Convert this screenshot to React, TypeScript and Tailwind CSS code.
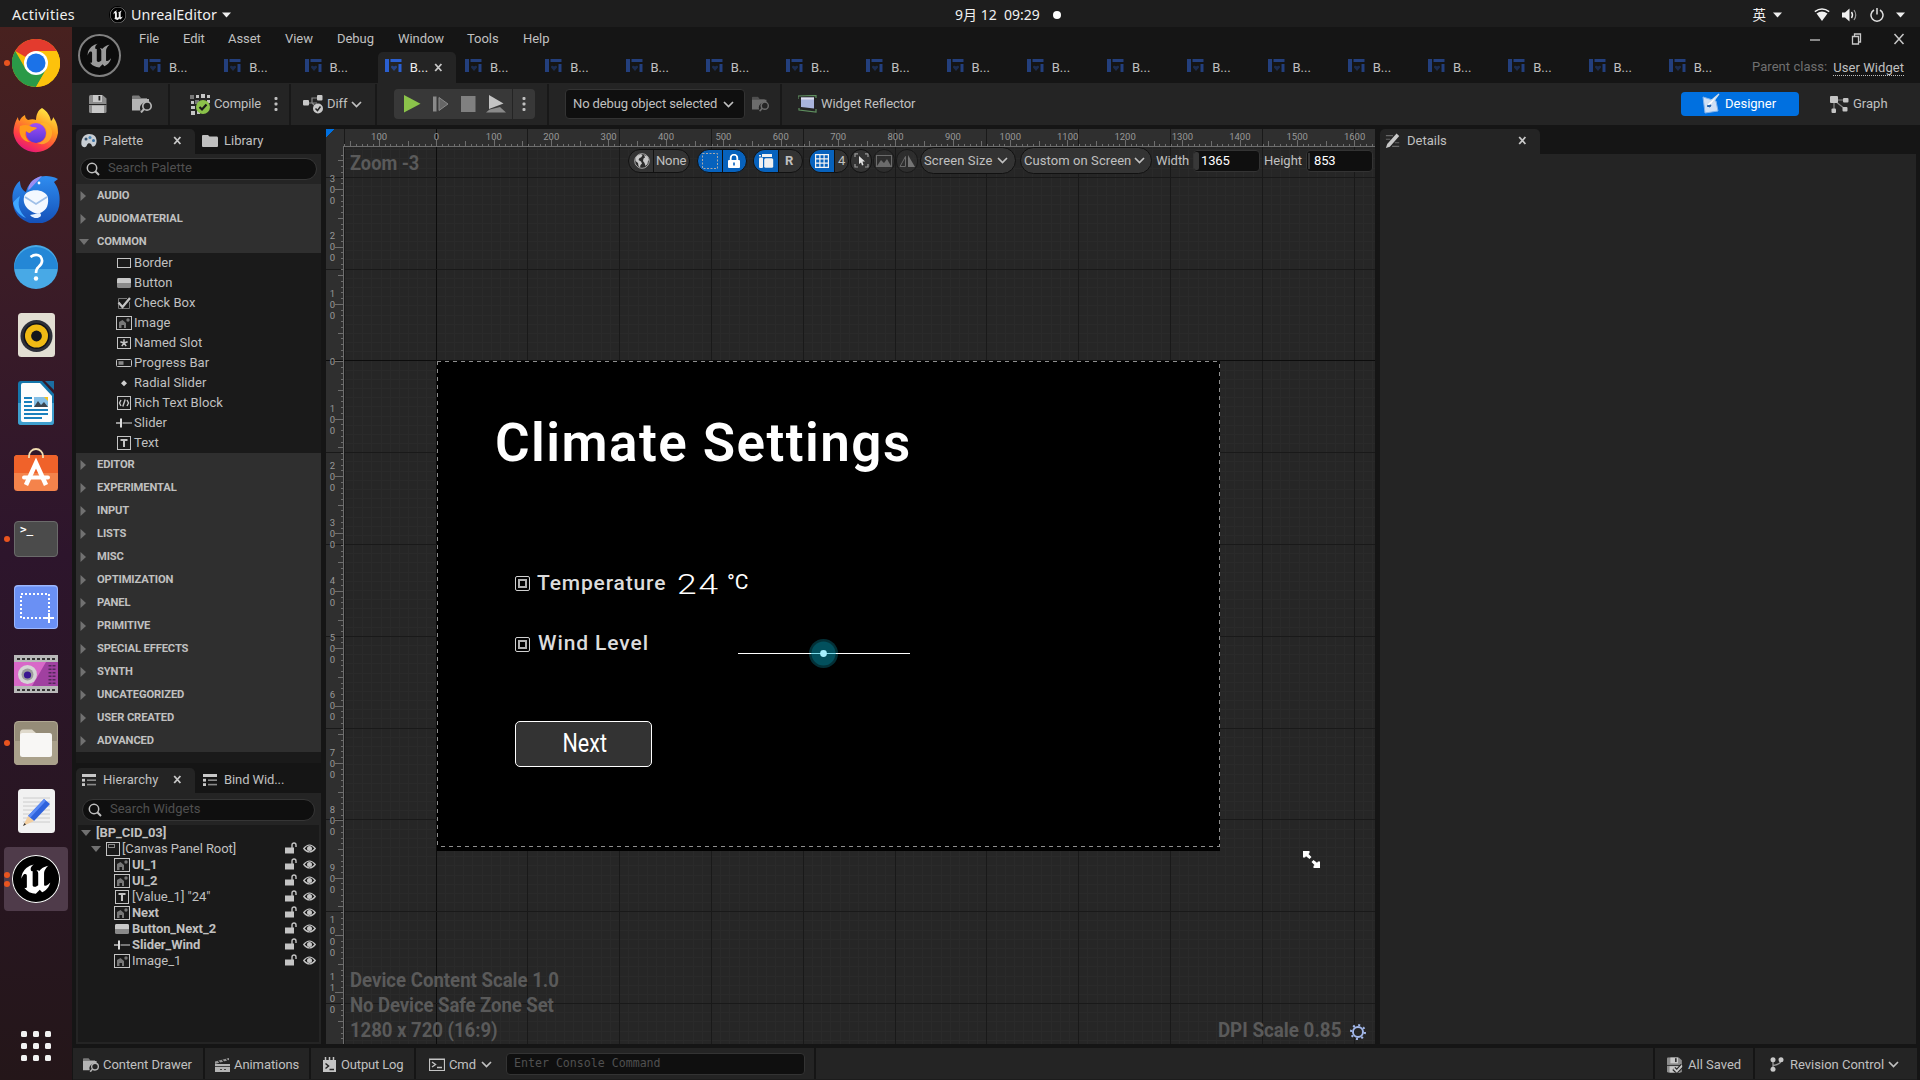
import React from "react";
import { SiUnrealengine } from "react-icons/si";

const range = (a: number, b: number) => Array.from({ length: b - a + 1 }, (_, i) => a + i);

/* ---------- small icons ---------- */

const Chevron = ({ className = "" }: { className?: string }) => (
  <svg className={"h-[7px] w-[11px] shrink-0 " + className} viewBox="0 0 11 7" fill="none" stroke="#c0c0c0" strokeWidth="1.7">
    <path d="M1 1l4.5 4.5L10 1" />
  </svg>
);

const Dots = () => (
  <svg className="h-4 w-1 shrink-0" viewBox="0 0 4 16" fill="#c0c0c0">
    <rect x=".5" y="1" width="3" height="3" rx="1" />
    <rect x=".5" y="6.5" width="3" height="3" rx="1" />
    <rect x=".5" y="12" width="3" height="3" rx="1" />
  </svg>
);

const Close = () => (
  <svg className="h-[9px] w-[9px] shrink-0" viewBox="0 0 9 9" stroke="#c8c8c8" strokeWidth="1.8">
    <path d="M1.2 1l6.2 7M7.4 1L1.2 8" />
  </svg>
);

const WidgetTabIcon = ({ active = false }: { active?: boolean }) => (
  <svg className="-mt-[3px] h-[14px] w-[17px] shrink-0" viewBox="0 0 17 14" fill={active ? "#2a5fd0" : "#233f7d"}>
    <rect x="0" y="0" width="4" height="13" />
    <rect x="5.5" y="0" width="11" height="3" />
    <rect x="13.5" y="5" width="3" height="8" />
    <path d="M9 12L6 8.5C5.4 6.6 8 6 9 7.500C10 6 12.600 6.600 12 8.500z" opacity=".55" />
  </svg>
);

const FolderSearch = ({ color = "#b4b4b4" }: { color?: string }) => (
  <svg className="h-[18px] w-[21px] shrink-0" viewBox="0 0 21 18">
    <path d="M0 1.500Q0 .5 1 .5H7L9 3H15V5H0z" fill={color} opacity=".6" />
    <path d="M0 4H17V8A6 6 0 0 0 8.500 15.500H0z" fill={color} />
    <circle cx="15" cy="11" r="4.200" fill="#242424" stroke={color} strokeWidth="1.700" />
    <path d="M12 14l-3 3.500" stroke={color} strokeWidth="2" />
  </svg>
);

const Floppy = ({ check = false }: { check?: boolean }) => (
  <svg className="h-[18px] w-[18px] shrink-0" viewBox="0 0 18 18">
    <path d="M0 1.500Q0 0 1.500 0H13.500L17.500 3.500V16.500Q17.500 18 16 18H1.500Q0 18 0 16.500z" fill="#8d8d8d" />
    <rect x="4" y="0" width="9" height="7" fill="#c8c8c8" />
    <rect x="9.500" y="1" width="1.800" height="4.500" fill="#242424" />
    <path d="M3 10.500H15V18H3z" fill="#c8c8c8" />
    <path d="M0 9.500H17.500" stroke="#242424" strokeWidth="1" />
    {check && <path d="M8 13l3.500 3.500L18 9.500" stroke="#242424" strokeWidth="5" fill="none" />}
    {check && <path d="M8 13l3.500 3.500L18 9.500" stroke="#c8c8c8" strokeWidth="2.400" fill="none" />}
  </svg>
);

const Search = () => (
  <svg className="h-[14px] w-[14px] shrink-0" viewBox="0 0 14 14" fill="none" stroke="#c0c0c0" strokeWidth="1.500">
    <circle cx="6" cy="6" r="4.700" />
    <path d="M9.300 9.300L13 13" strokeWidth="2" />
  </svg>
);

const ListIcon = () => (
  <svg className="h-3 w-[15px] shrink-0" viewBox="0 0 15 12" fill="#c8c8c8">
    <rect width="14" height="3" />
    <rect y="4.800" width="3" height="2.800" />
    <rect y="9.200" width="3" height="2.800" />
    <rect x="5" y="5.400" width="9" height="1.600" fill="#8a8a8a" />
    <rect x="5" y="9.800" width="9" height="1.600" fill="#8a8a8a" />
  </svg>
);

type Kind = "border" | "button" | "check" | "image" | "slot" | "progress" | "radial" | "rich" | "slider" | "text" | "panel";

const W = ({ k }: { k: Kind }) => (
  <svg className="h-[14px] w-4 shrink-0" viewBox="0 0 16 14" fill="none" stroke="#c4c4c4" strokeWidth="1">
    {k === "border" && <rect x="1.500" y="2.500" width="13" height="9" />}
    {k === "button" && (
      <>
        <rect x="1" y="2" width="14" height="10" rx="1.500" fill="#8a8a8a" stroke="none" />
        <path d="M1 7V3.500Q1 2 2.500 2H13.500Q15 2 15 3.500V7z" fill="#c8c8c8" stroke="none" />
      </>
    )}
    {k === "check" && (
      <>
        <path d="M11 2.500H2.500V12.500H13.500V6" stroke="#777" />
        <path d="M2.500 6.500L6.500 11L14 2" strokeWidth="2.300" />
      </>
    )}
    {k === "image" && (
      <>
        <rect x=".5" y=".5" width="15" height="13" />
        <path d="M3 12V6L6.500 4L10 7V12H8V9H5.500V12z" fill="#777" stroke="none" />
        <circle cx="12" cy="4" r="1.700" fill="#777" stroke="none" />
      </>
    )}
    {k === "slot" && (
      <>
        <rect x="1.500" y="1.500" width="13" height="11" />
        <path d="M8 7V3.200M8 7L11.600 5.800M8 7L10.200 10.200M8 7L5.800 10.200M8 7L4.400 5.800" strokeWidth="1.500" />
      </>
    )}
    {k === "progress" && (
      <>
        <rect x=".5" y="3.500" width="15" height="7" rx="1" />
        <rect x="2.500" y="5.200" width="5" height="3.600" fill="#888" stroke="none" />
      </>
    )}
    {k === "radial" && <path d="M8 4.200L11 7.200L8 10.200L5 7.200z" fill="#d0d0d0" stroke="none" />}
    {k === "rich" && (
      <>
        <rect x="1.500" y=".5" width="13" height="13" />
        <path d="M5 4L3.500 7L5 10M11 4L12.500 7L11 10M9.200 3.500L6.800 10.500" strokeWidth="1.400" />
      </>
    )}
    {k === "slider" && (
      <>
        <path d="M0 7H4" strokeWidth="2" stroke="#999" />
        <path d="M6.500 7H16" strokeWidth="2" stroke="#777" />
        <path d="M5 2.500V11.500" strokeWidth="2" stroke="#ddd" />
      </>
    )}
    {k === "text" && (
      <>
        <rect x="1.500" y=".5" width="13" height="13" />
        <path d="M4.500 4H11.500M8 4V11" strokeWidth="2" />
      </>
    )}
    {k === "panel" && (
      <>
        <rect x="1.500" y=".5" width="13" height="13" />
        <rect x="3.500" y="2.500" width="6" height="3" stroke="#888" />
      </>
    )}
  </svg>
);

const Lock = () => (
  <svg className="h-3 w-3 shrink-0" viewBox="0 0 12 12">
    <rect x="0" y="5.500" width="9" height="6" fill="#c4c4c4" />
    <path d="M7 6V3A2 2 0 0 1 11 3V5" stroke="#c4c4c4" strokeWidth="1.400" fill="none" />
  </svg>
);

const Eye = () => (
  <svg className="h-[9px] w-[13px] shrink-0" viewBox="0 0 13 9">
    <path d="M.7 4.500Q6.500-2.500 12.300 4.500Q6.500 11.500 .7 4.500z" fill="none" stroke="#c4c4c4" strokeWidth="1.200" />
    <circle cx="6.500" cy="4.500" r="2.500" fill="#c4c4c4" />
  </svg>
);

/* ---------- desktop shell ---------- */

const Caret = () => (
  <svg className="h-[6px] w-[9px] shrink-0" viewBox="0 0 9 6" fill="#eee">
    <path d="M0 .5H9L4.500 5.500z" />
  </svg>
);

const TopBar = () => (
  <div className="grid h-[27px] shrink-0 grid-cols-[955px_1fr] bg-[#1d1d1d] font-['Noto_Sans','Noto_Sans_CJK_SC',sans-serif] text-[14.300px] leading-[28px] text-[#f0f0f0]">
    <div className="flex items-center pl-3">
      <span className="w-[97px] pt-px tracking-[0.350px]">Activities</span>
      <span className="flex h-[17px] w-[17px] items-center justify-center rounded-full bg-black">
        <SiUnrealengine className="h-4 w-4" />
      </span>
      <span className="ml-[5px] w-[86px] pt-px tracking-[0.100px]">UnrealEditor</span>
      <span className="ml-[5px]"><Caret /></span>
    </div>
    <div className="flex items-center">
      <span className="w-[86px] pt-px text-[14px] whitespace-pre">9月 12  09:29</span>
      <span className="ml-3 h-2 w-2 rounded-full bg-white" />
      <span className="ml-auto pt-px text-[13.500px]">英</span>
      <span className="ml-[7px]"><Caret /></span>
      <svg className="ml-8 h-[14px] w-[16px]" viewBox="0 0 16 14" fill="#f0f0f0">
        <path d="M2.500 5.500Q8 1.500 13.500 5.500L8 13z" />
        <path d="M.8 3.600Q8-1.500 15.200 3.600" stroke="#f0f0f0" strokeWidth="1.500" fill="none" />
      </svg>
      <svg className="ml-3 h-[14px] w-[16px]" viewBox="0 0 16 14" fill="#f0f0f0">
        <path d="M0 4.500H3L7.500 .5V13.500L3 9.500H0z" />
        <path d="M9.500 4Q11.500 7 9.500 10" stroke="#f0f0f0" strokeWidth="1.400" fill="none" />
        <path d="M12 2Q15.500 7 12 12" stroke="#999" strokeWidth="1.200" fill="none" />
      </svg>
      <svg className="ml-3 h-[14px] w-[14px]" viewBox="0 0 14 14" stroke="#e0e0e0" strokeWidth="1.500" fill="none">
        <path d="M4 2A6 6 0 1 0 10 2M7 0V6.500" />
      </svg>
      <span className="mr-[15px] ml-3"><Caret /></span>
    </div>
  </div>
);

const Chrome = () => (
  <svg className="h-12 w-12" viewBox="0 0 48 48">
    <circle cx="24" cy="24" r="24" fill="#fbbc05" />
    <path d="M24 24L3.200 12A24 24 0 0 1 44.800 12H24z" fill="#e33b2e" />
    <path d="M3.200 12A24 24 0 0 0 24 48L34.400 30L24 24L13.600 30z" fill="#2a9a48" />
    <path d="M24 12H44.800A24 24 0 0 1 24 48L34.400 30z" fill="#fdc20c" />
    <circle cx="24" cy="24" r="12" fill="#fff" />
    <circle cx="24" cy="24" r="9.500" fill="#1b72e8" />
  </svg>
);

const Firefox = () => (
  <svg className="h-12 w-12" viewBox="0 0 48 48">
    <defs>
      <linearGradient id="fx" x1=".8" y1="0" x2=".3" y2="1">
        <stop offset="0" stopColor="#fff14a" />
        <stop offset=".4" stopColor="#ff9a20" />
        <stop offset=".75" stopColor="#ff3f45" />
        <stop offset="1" stopColor="#e2137e" />
      </linearGradient>
      <linearGradient id="fp" x1="0" y1="0" x2="0" y2="1">
        <stop offset="0" stopColor="#a24ff5" />
        <stop offset="1" stopColor="#5536d6" />
      </linearGradient>
    </defs>
    <path d="M30 1C36 5 38 9 39 14C41 12 41 11 41 10C45 15 46 20 46 26A22.500 22.500 0 0 1 1.500 26C1.500 19 4 13 6 10C6 12 6.500 13 7.500 14C8.500 11 11 9 13 8C13 10 14 12 16 13C19 12 22 12 24 13C24 8 26 3 30 1z" fill="url(#fx)" />
    <circle cx="24" cy="26" r="10" fill="url(#fp)" />
    <path d="M8 19C13 17 17 18 20 20C22 20 24 20 25 21C23 23 20 23 18 26C16 26 14 24 14 24C12 28 15 34 19 35C10 35 6 27 8 19z" fill="#ff9a1c" />
    <path d="M28 17C33 18 36 23 34 29C33 33 29 36 25 36C33 40 41 33 40 24C38 17 33 14 28 17z" fill="#ffb52a" opacity=".75" />
  </svg>
);

const Thunderbird = () => (
  <svg className="h-12 w-12" viewBox="0 0 48 48">
    <defs>
      <linearGradient id="tb" x1="0" y1="0" x2="0" y2="1">
        <stop offset="0" stopColor="#2f8df0" />
        <stop offset="1" stopColor="#1450b8" />
      </linearGradient>
    </defs>
    <path d="M18 9C22 2 34-2 46 4L42 7C47 14 48 20 47.500 27A23 21 0 0 1 1 28C-1 20 2 10 8 6C8 11 10 15 14 17C15 13 16 11 18 9z" fill="url(#tb)" />
    <path d="M16 15C17 7 22 3 30 1C26 5 22 10 18 14z" fill="#9a8df2" />
    <path d="M1 28C2 33 6 40 14 43C7 36 5 30 8 21C4 24 2 26 1 28z" fill="#3fa6ff" />
    <path d="M12 22C14 13 34 13 36 23C37 32 33 36 28 38C25 40 20 37 16 34C13 31 11 27 12 22z" fill="#f4f8ff" />
    <path d="M13 22L24 29L35 22" stroke="#9fbfe8" strokeWidth="1.800" fill="none" />
    <path d="M28 38C32 42 23 46 18 40z" fill="#e6f1ff" />
    <circle cx="27" cy="8" r="1.400" fill="#fff" />
  </svg>
);

const Help = () => (
  <svg className="h-11 w-11" viewBox="0 0 44 44">
    <circle cx="22" cy="22" r="22" fill="#48a9e6" />
    <path d="M0 24A22 22 0 0 1 44 24z" fill="#2487d6" />
    <path d="M16.500 12Q22 8 26.500 11.500Q30.500 17 24.500 22Q22 24 22 28" stroke="#fff" strokeWidth="2.600" fill="none" />
    <circle cx="22" cy="33.500" r="2.200" fill="#fff" />
  </svg>
);

const Speaker = () => (
  <svg className="h-11 w-[37px]" viewBox="0 0 37 44">
    <rect width="37" height="44" rx="3.500" fill="#e2ded2" />
    <circle cx="18.500" cy="23" r="16" fill="#2d2f38" />
    <circle cx="18.500" cy="23" r="13" fill="#11131a" />
    <circle cx="18.500" cy="23" r="11.500" fill="#f0ba14" />
    <circle cx="18.500" cy="23" r="5.400" fill="#15171c" />
  </svg>
);

const Writer = () => (
  <svg className="h-11 w-9" viewBox="0 0 36 44">
    <path d="M3 0H24L36 13V41Q36 44 33 44H3Q0 44 0 41V3Q0 0 3 0z" fill="#1576ab" />
    <path d="M0 22H36V41Q36 44 33 44H3Q0 44 0 41z" fill="#3f9fce" />
    <path d="M5 2H22L34 15V39Q34 41 32 41H5Q3 41 3 39V4Q3 2 5 2z" fill="#fdfdfd" />
    <path d="M27 0H36V9z" fill="#1b6ea2" />
    <path d="M6 17H14M6 21H14M6 25H14M6 29H30M6 33H30M6 37H24" stroke="#1a80bd" strokeWidth="1.800" />
    <rect x="16" y="16" width="14" height="10" fill="#85bfe6" />
    <path d="M16 26L20 20L23 24L26 21L30 26z" fill="#3a4650" />
    <path d="M26 16H30V20z" fill="#f5c31b" />
  </svg>
);

const Software = () => (
  <svg className="-mt-1 h-11 w-11" viewBox="0 0 44 44">
    <rect y="8" width="44" height="36" rx="3.500" fill="#f4834b" />
    <path d="M0 26V11.500Q0 8 3.500 8H40.500Q44 8 44 11.500V26z" fill="#f0622a" />
    <path d="M12 38L22 16L32 38" stroke="#fff" strokeWidth="4.500" fill="none" />
    <path d="M10 30.500H34" stroke="#fff" strokeWidth="4" strokeLinecap="round" />
    <path d="M15 11V9A7 7 0 0 1 29 9V11" stroke="#f0dcb0" strokeWidth="1.800" fill="none" />
  </svg>
);

const Terminal = () => (
  <div className="h-9 w-11 rounded-[4px] border border-[#6b6b6b] bg-[#4b4b4b] pt-[2px] pl-[5px] font-['DejaVu_Sans_Mono',monospace] text-[11px] leading-[12px] font-bold text-white">&gt;_</div>
);

const Screenshot = () => (
  <svg className="h-11 w-11" viewBox="0 0 44 44">
    <rect width="44" height="44" rx="4" fill="#9bb7ff" />
    <rect x="1" y="1.500" width="42" height="41.500" rx="3" fill="#6a90f4" />
    <rect x="7" y="9" width="28" height="24" fill="none" stroke="#fff" strokeWidth="2" strokeDasharray="2 2" />
    <path d="M35 28V38M30 33H40" stroke="#fff" strokeWidth="2" />
  </svg>
);

const Video = () => (
  <svg className="-mt-[2px] h-[38px] w-11" viewBox="0 0 44 38">
    <rect width="44" height="38" fill="#b9b9b9" />
    <path d="M3 4H42M3 35H42" stroke="#333" strokeWidth="2" strokeDasharray="3 2" />
    <rect y="7" width="44" height="24" fill="#a040a0" />
    <path d="M0 7H32L18 31H0z" fill="#d868c8" />
    <path d="M36 10V29M40 10V29" stroke="#53285a" strokeWidth="3" strokeDasharray="1.500 2" />
    <circle cx="13.500" cy="19.500" r="9.500" fill="#d5d5d5" />
    <circle cx="13.500" cy="19.500" r="6" fill="#9c9c9c" />
    <circle cx="13.500" cy="20" r="3.600" fill="#3a1590" />
  </svg>
);

const Files = () => (
  <svg className="h-11 w-11" viewBox="0 0 44 44">
    <rect width="44" height="44" rx="4.500" fill="#b0a892" />
    <rect x="1" y="1" width="42" height="42" rx="4" fill="#958c78" />
    <path d="M0 20H44V40Q44 44 40 44H4Q0 44 0 40z" fill="#aaa18b" />
    <path d="M6 12Q6 8.500 9 8.500H18L22 12V16H6z" fill="#dfd9cb" />
    <rect x="6" y="12" width="32" height="24" rx="2.500" fill="#f8f7f5" />
  </svg>
);

const Editor = () => (
  <svg className="h-11 w-[37px]" viewBox="0 0 37 44">
    <rect width="37" height="44" rx="3.500" fill="#f1f1f1" />
    <path d="M5 9H32M5 13H32M5 17H32M5 21H32M5 25H32M5 29H32M5 33H32" stroke="#ccc" strokeWidth="1" />
    <path d="M10 27L26 10L32 15L16 32z" fill="#2f62dc" />
    <path d="M10 27L26 10L28 11.700L12 29z" fill="#5b8af5" />
    <path d="M10 27L5 37L16 32z" fill="#f3cfa0" />
    <path d="M6.500 34L5 37L8 35.500z" fill="#333" />
  </svg>
);

const dockItems: { icon: React.ReactNode; dots: number; active?: boolean }[] = [
  { icon: <Chrome />, dots: 1 },
  { icon: <Firefox />, dots: 0 },
  { icon: <Thunderbird />, dots: 0 },
  { icon: <Help />, dots: 0 },
  { icon: <Speaker />, dots: 0 },
  { icon: <Writer />, dots: 0 },
  { icon: <Software />, dots: 0 },
  { icon: <Terminal />, dots: 1 },
  { icon: <Screenshot />, dots: 0 },
  { icon: <Video />, dots: 0 },
  { icon: <Files />, dots: 1 },
  { icon: <Editor />, dots: 0 },
  {
    icon: (
      <span className="flex h-12 w-12 items-center justify-center rounded-full bg-black text-white">
        <SiUnrealengine className="h-12 w-12" />
      </span>
    ),
    dots: 2,
    active: true,
  },
];

const Dock = () => (
  <div className="flex w-[72px] shrink-0 flex-col items-center gap-1 bg-linear-to-b from-[#48211f] via-[#2d152c] to-[#241619] pt-1">
    {dockItems.map((d, i) => (
      <div key={i} className={"relative flex h-16 w-16 items-center justify-center rounded-[4px] " + (d.active ? "bg-[#4f3b4a]" : "")}>
        {d.icon}
        <div className="absolute top-0 left-0 flex h-16 flex-col items-center justify-center gap-[3px]">
          {range(1, d.dots).map((n) => (
            <span key={n} className="h-[6px] w-[6px] rounded-full bg-[#e9541f]" />
          ))}
        </div>
      </div>
    ))}
    <div className="mt-auto mb-[19px] grid grid-cols-3 gap-[6px]">
      {range(1, 9).map((n) => (
        <span key={n} className="h-[6px] w-[6px] rounded-[1.500px] bg-[#f2f2f2]" />
      ))}
    </div>
  </div>
);

/* ---------- editor header ---------- */

const menus: [string, string][] = [
  ["File", "w-[44px]"],
  ["Edit", "w-[45px]"],
  ["Asset", "w-[57px]"],
  ["View", "w-[52px]"],
  ["Debug", "w-[61px]"],
  ["Window", "w-[69px]"],
  ["Tools", "w-[56px]"],
  ["Help", "w-[40px]"],
];

const Header = () => (
  <div className="flex h-14 shrink-0">
    <div className="flex w-[65px] items-center pl-[6px]">
      <span className="flex h-[43px] w-[43px] items-center justify-center rounded-full border-2 border-[#808080] bg-[#0c0c0c]">
        <span className="flex h-[34px] w-[34px] items-center justify-center overflow-hidden rounded-full">
          <SiUnrealengine className="h-[39px] w-[39px] shrink-0 text-[#9a9a9a]" />
        </span>
      </span>
    </div>
    <div className="flex flex-1 flex-col">
      <div className="flex h-[25px] items-center pb-[2px] pl-[2px] tracking-[-0.050px]">
        {menus.map(([m, w]) => (
          <span key={m} className={w}>{m}</span>
        ))}
        <svg className="ml-auto mr-[15px] h-4 w-[96px]" viewBox="0 0 96 16" fill="none" stroke="#c8c8c8" strokeWidth="1.300">
          <path d="M1 9H11" />
          <path d="M43.500 5.500H49.500V13H43.500zM45.500 5V3H51.500V11H50" />
          <path d="M85.500 3L94.500 13M94.500 3L85.500 13" strokeWidth="1.500" />
        </svg>
      </div>
      <div className="flex h-[31px]">
        {range(0, 19).map((i) => (
          <div key={i} className="flex w-[80.250px] shrink-0">
            <div className={"flex w-[78px] items-center rounded-t-[5px] pl-[7px] " + (i === 3 ? "bg-[#242424] text-[#eee]" : "")}>
              <WidgetTabIcon active={i === 3} />
              <span className="ml-2 w-[24px]">B...</span>
              {i === 3 && <Close />}
            </div>
          </div>
        ))}
        <div className="ml-auto flex items-center gap-[6px] pr-4 tracking-[0.050px]">
          <span className="pb-px text-[#707070]">Parent class:</span>
          <span className="border-b border-dotted border-[#c0c0c0] leading-[15px]">User Widget</span>
        </div>
      </div>
    </div>
  </div>
);

const Sep = () => <span className="h-[41px] w-[2px] shrink-0 bg-[#181818]" />;

const Toolbar = () => (
  <div className="flex h-[42px] shrink-0 items-center bg-[#242424] tracking-[-0.100px]">
    <div className="flex w-[96px] items-center gap-[25px] pl-[17px]"><Floppy /><FolderSearch /></div>
    <Sep />
    <div className="flex w-[119px] items-center pl-5">
      <svg className="h-[21px] w-[21px]" viewBox="0 0 21 21">
        <path d="M0 1H4V5H0zM5 6H9V10H5z" fill="#777" />
        <path d="M6 1H9V4H6zM11 0H15V4H11zM17 1H20V4H17zM1 7H4V10H1zM1 12H5V15H1zM1 17H5V21H1zM17 6H20V9H17zM7 17H10V20H7z" fill="#c4c4c4" />
        <circle cx="13" cy="13" r="7" fill="#8bc24a" />
        <path d="M9.500 13L12 15.500L16.500 10.500" stroke="#1a1a1a" strokeWidth="2.200" fill="none" />
      </svg>
      <span className="ml-[3px] w-[60px]">Compile</span>
      <Dots />
    </div>
    <Sep />
    <div className="flex w-[84px] items-center pl-3">
      <svg className="h-[19px] w-5" viewBox="0 0 20 19">
        <path d="M5 8H14M9 8V3H14M9 8L14 13" stroke="#888" strokeWidth="1.200" fill="none" />
        <rect x="0" y="5" width="6" height="5.500" rx="1" fill="#c8c8c8" />
        <rect x="14" y="0" width="5.500" height="5.500" rx="1" fill="#c8c8c8" />
        <circle cx="15" cy="13.500" r="5" fill="#c8c8c8" />
        <path d="M12.500 13.500L14.500 15.500L17.500 11.500" stroke="#242424" strokeWidth="1.500" fill="none" />
      </svg>
      <span className="ml-1 w-6">Diff</span>
      <Chevron />
    </div>
    <Sep />
    <div className="flex w-[170px] pl-[17px]">
      <div className="flex h-[30px] w-[141px] items-center rounded-[4px] bg-[#383838]">
        <svg className="h-[18px] w-[118px]" viewBox="0 0 118 18">
          <path d="M10 0L26.500 8.800L10 17.500z" fill="#8bc34a" />
          <rect x="39" y="1.500" width="3.500" height="15" fill="#8a8a8a" />
          <path d="M45 2.500L54 9L45 15.500z" fill="#666" stroke="#8a8a8a" />
          <rect x="67" y="1" width="14.500" height="16" fill="#808080" />
          <path d="M95 0L109.500 8.500L95 14z" fill="#c4c4c4" />
          <path d="M92 17.500L95.500 14.500L106 12L112 17.500z" fill="#8a8a8a" />
        </svg>
        <span className="h-[30px] w-px bg-[#242424]" />
        <span className="ml-[9px]"><Dots /></span>
      </div>
    </div>
    <Sep />
    <div className="flex w-[231px] items-center pl-4">
      <div className="flex h-[30px] w-[180px] items-center justify-between rounded-[4px] border border-[#333] bg-[#0f0f0f] pr-[10px] pl-[7px] tracking-[-0.120px] whitespace-nowrap">
        No debug object selected <Chevron />
      </div>
      <span className="ml-[7px] flex w-[18px] origin-left scale-[0.850] opacity-50"><FolderSearch /></span>
    </div>
    <Sep />
    <div className="flex items-center pl-4">
      <svg className="h-[18px] w-[19px]" viewBox="0 0 19 18">
        <path d="M0 4V1L18 .5V3M1 13V15L18 17V14" stroke="#5f8f5f" strokeWidth="1.200" fill="none" />
        <path d="M3 2.500H16V13.500L3 12z" fill="#a9b4dc" />
        <path d="M3 2.500H16V4.500H3z" fill="#dde" />
      </svg>
      <span className="ml-1">Widget Reflector</span>
    </div>
    <div className="ml-auto flex h-6 w-[118px] items-center rounded-[4px] bg-[#0070e0] pl-5 text-white">
      <svg className="h-[22px] w-5" viewBox="0 0 20 22">
        <path d="M2 4L15 8L17 18L4 20z" fill="#cfe0f5" stroke="#7fb2ec" strokeWidth="1" />
        <path d="M18 1L10 12L6 13L7 10z" fill="#fff" stroke="#cde" strokeWidth="1.200" />
        <path d="M6 13L10 12L9 14z" stroke="#1c5fae" fill="#1c5fae" />
      </svg>
      <span className="ml-1 tracking-normal">Designer</span>
    </div>
    <div className="flex w-[121px] items-center pl-[31px]">
      <svg className="h-[17px] w-[19px]" viewBox="0 0 19 17">
        <path d="M7 4H15M5 5L15 13M4 6V15" stroke="#888" strokeWidth="1.200" />
        <rect width="8" height="7" rx="1" fill="#c4c4c4" />
        <rect x="13" y="2" width="5.500" height="4.500" rx="1" fill="#c4c4c4" />
        <rect x="12.500" y="11" width="5" height="4.500" rx="1" fill="#c4c4c4" />
        <rect x="1.500" y="12.500" width="4.500" height="4.500" rx="1" fill="#c4c4c4" />
      </svg>
      <span className="ml-1 tracking-normal">Graph</span>
    </div>
  </div>
);

/* ---------- left column ---------- */

const Category = ({ label, open = false }: { label: string; open?: boolean }) => (
  <div className="flex h-[23px] items-center bg-[#2f2f2f]">
    <svg className="ml-[3px] h-[10px] w-[10px]" viewBox="0 0 10 10" fill="#717171">
      {open ? <path d="M0 2H10L5 8z" /> : <path d="M1.500 0L7 5L1.500 10z" />}
    </svg>
    <span className="ml-[8px] text-[11.200px] font-bold tracking-[-0.120px]">{label}</span>
  </div>
);

const paletteItems: [Kind, string][] = [
  ["border", "Border"],
  ["button", "Button"],
  ["check", "Check Box"],
  ["image", "Image"],
  ["slot", "Named Slot"],
  ["progress", "Progress Bar"],
  ["radial", "Radial Slider"],
  ["rich", "Rich Text Block"],
  ["slider", "Slider"],
  ["text", "Text"],
];

const categories = ["EDITOR", "EXPERIMENTAL", "INPUT", "LISTS", "MISC", "OPTIMIZATION", "PANEL", "PRIMITIVE", "SPECIAL EFFECTS", "SYNTH", "UNCATEGORIZED", "USER CREATED", "ADVANCED"];

const SearchBox = ({ text }: { text: string }) => (
  <div className="flex h-[22px] items-center gap-2 rounded-full border border-[#363636] bg-[#0f0f0f] pl-[5px] text-[#505050]">
    <Search />
    <span className="-mt-[2px]">{text}</span>
  </div>
);

const Palette = () => (
  <div className="flex h-[634px] shrink-0 flex-col">
    <div className="flex h-[25px] shrink-0">
      <div className="flex w-[119px] items-center rounded-t-[5px] bg-[#242424] pb-[2px] pl-[5px]">
        <svg className="h-[14px] w-4" viewBox="0 0 16 14">
          <path d="M8 0C14 0 16 4 15.500 8C15 12 12 13.500 11 12C10.500 9 7 8 6 11C5 14 2 14 .5 11C-.5 5 3 0 8 0z" fill="#c9ced4" />
          <circle cx="5" cy="5" r="1.500" fill="#35506b" />
          <circle cx="9" cy="3.500" r="1.500" fill="#4a86b8" />
          <circle cx="12.500" cy="6.500" r="1.500" fill="#3d75a8" />
        </svg>
        <span className="ml-[6px] w-[70px] tracking-[-0.100px]">Palette</span>
        <Close />
      </div>
      <div className="flex items-center pb-[2px] pl-[7px]">
        <svg className="h-3 w-4" viewBox="0 0 16 12" fill="#c0c0c0">
          <path d="M0 1Q0 0 1 0H6L7.500 1.500H15Q16 1.500 16 3V11Q16 12 15 12H1Q0 12 0 11z" />
        </svg>
        <span className="ml-[6px]">Library</span>
      </div>
    </div>
    <div className="h-[30px] shrink-0 bg-[#242424] px-1 pt-1"><div className="w-[237px]"><SearchBox text="Search Palette" /></div></div>
    <Category label="AUDIO" />
    <Category label="AUDIOMATERIAL" />
    <Category label="COMMON" open />
    <div className="bg-[#1a1a1a]">
      {paletteItems.map(([k, t]) => (
        <div key={t} className="flex h-5 items-center pl-10">
          <W k={k} />
          <span className="ml-[2px] -mt-px tracking-[0.050px]">{t}</span>
        </div>
      ))}
    </div>
    {categories.map((c) => (
      <Category key={c} label={c} />
    ))}
    <div className="flex-1 bg-[#1a1a1a]" />
  </div>
);

const tree: [Kind, string, boolean][] = [
  ["image", "UI_1", true],
  ["image", "UI_2", true],
  ["text", '[Value_1] "24"', false],
  ["image", "Next", true],
  ["button", "Button_Next_2", true],
  ["slider", "Slider_Wind", true],
  ["image", "Image_1", false],
];

const RowTools = () => (
  <span className="ml-auto flex items-center gap-[6px] pr-[3px] pb-[2px]"><Lock /><Eye /></span>
);

const Down = () => (
  <svg className="h-[6px] w-[10px] shrink-0" viewBox="0 0 10 6" fill="#717171"><path d="M0 0H10L5 6z" /></svg>
);

const Hierarchy = () => (
  <div className="mt-[5px] flex flex-1 flex-col">
    <div className="flex h-[25px] shrink-0">
      <div className="flex w-[119px] items-center rounded-t-[5px] bg-[#242424] pb-[2px] pl-[6px]">
        <ListIcon />
        <span className="ml-[6px] w-[70px] tracking-[0.050px]">Hierarchy</span>
        <Close />
      </div>
      <div className="flex items-center pb-[2px] pl-2"><ListIcon /><span className="ml-[6px] tracking-[-0.100px]">Bind Wid...</span></div>
    </div>
    <div className="flex flex-1 flex-col bg-[#242424] px-[2px] pb-[2px]">
      <div className="h-8 shrink-0 pt-[6px] pr-1 pl-1"><SearchBox text="Search Widgets" /></div>
      <div className="flex-1 bg-[#1a1a1a] tracking-[-0.080px]">
        <div className="flex h-4 items-center pl-[3px]"><Down /><span className="ml-[5px] font-bold">[BP_CID_03]</span></div>
        <div className="flex h-4 items-center pl-[13px]">
          <Down /><span className="ml-1 flex"><W k="panel" /></span><span className="ml-px">[Canvas Panel Root]</span><RowTools />
        </div>
        {tree.map(([k, t, b]) => (
          <div key={t} className="flex h-4 items-center pl-9">
            <W k={k} /><span className={"ml-[2px] " + (b ? "font-bold" : "tracking-normal")}>{t}</span><RowTools />
          </div>
        ))}
      </div>
    </div>
  </div>
);

/* ---------- designer viewport ---------- */

/* U: pixels per 100 ruler units, G: pixels per major grid cell */
const U = 57.38;
const G = 91.8;
const GX = 435.6;
const GY = 360.45;
const RX = 436.3;
const RY = 361.3;

const Rulers = () => (
  <svg className="absolute inset-0 h-full w-full" viewBox="326 129 1049 915" shapeRendering="crispEdges">
    {range(-10, 103).map((i) => (
      <rect key={"v" + i} x={Math.round(GX + (i * G) / 10)} y="147" width="1" height="900" fill="#2a2a2a" />
    ))}
    {range(-23, 75).map((i) => (
      <rect key={"h" + i} x="344" y={Math.round(GY + (i * G) / 10)} width="1040" height="1" fill="#2a2a2a" />
    ))}
    <rect x="326" y="129" width="1049" height="17" fill="#2f2f2f" />
    <rect x="326" y="146" width="17" height="898" fill="#2f2f2f" />
    {range(-1, 10).map((i) => (
      <rect key={"V" + i} x={Math.round(GX + i * G)} y="129" width="1" height="915" fill={i === 0 ? "#0c0c0c" : "#191919"} />
    ))}
    {range(-2, 7).map((i) => (
      <rect key={"H" + i} x="326" y={Math.round(GY + i * G)} width="1049" height="1" fill={i === 0 ? "#0c0c0c" : "#191919"} />
    ))}
    <rect x="343" y="146" width="1032" height="1" fill="#6e6e6e" />
    <rect x="343" y="146" width="1" height="898" fill="#6e6e6e" />
    {range(-16, 163).map((i) => {
      const h = i % 10 === 0 ? 6 : i % 5 === 0 ? 5 : 2;
      return <rect key={"t" + i} x={Math.round(RX + (i * U) / 10)} y={146 - h} width="1" height={h} fill="#6e6e6e" />;
    })}
    {range(-36, 118).map((i) => {
      const w = i % 10 === 0 ? 8 : i % 5 === 0 ? 5 : 2;
      return <rect key={"s" + i} x={343 - w} y={Math.round(RY + (i * U) / 10)} width={w} height="1" fill="#6e6e6e" />;
    })}
    <g fill="#989898" fontSize="9.500" fontFamily="Roboto, sans-serif" textAnchor="middle">
      {range(-1, 16).map((i) => (
        <text key={i} x={RX + 0.2 + i * U} y="140">{Math.abs(i * 100)}</text>
      ))}
      {range(-3, 11).map((i) => {
        const s = String(Math.abs(i * 100)).split("");
        return s.map((c, j) => (
          <text key={i + "-" + j} x="332.500" y={RY + 3.9 + i * U + (j - (s.length - 1) / 2) * 11}>{c}</text>
        ));
      })}
    </g>
    <path d="M326 129H334L326 137z" fill="#0070e0" />
  </svg>
);

const pill = "flex items-center overflow-hidden rounded-full border border-[#111] bg-[#333]";

const ViewportBar = () => (
  <div className="absolute top-[18px] left-[302px] flex h-[27px] items-center">
    <div className={pill + " h-6 w-[62px]"}>
      <span className="flex h-6 w-[25px] shrink-0 items-center justify-center border-r border-[#111] pl-[2px]">
        <svg className="h-4 w-4" viewBox="0 0 16 16">
          <circle cx="8" cy="8" r="7.300" fill="#2c2c2c" stroke="#a8a8a8" />
          <path d="M1.500 5Q3 2 7 1L8.500 2.500L7 4.500L5.500 5L4.500 7L7 8.500L8 10.500L6.500 12L6 14.500L4.500 13L4 10L1.500 8z" fill="#c8c8c8" />
          <path d="M10 2L13.500 3.500L15 7L14 8L13.500 11L11.500 13L10.500 10L9 8L9.500 5.500L11 4.500z" fill="#c8c8c8" />
        </svg>
      </span>
      <span className="ml-[2px] tracking-[-0.150px]">None</span>
    </div>
    <div className="ml-[7px] flex h-6 w-[50px] items-center overflow-hidden rounded-full border border-[#111] bg-[#0762bd]">
      <span className="flex h-6 w-[25px] items-center justify-center border-r border-[#111]">
        <svg className="h-4 w-4" viewBox="0 0 16 16"><rect x=".5" y=".5" width="15" height="15" fill="none" stroke="#a9a9a9" strokeDasharray="2 1.500" /></svg>
      </span>
      <svg className="ml-[5px] h-[14px] w-3" viewBox="0 0 12 14">
        <rect y="6" width="12" height="8" rx="1" fill="#fff" />
        <path d="M2.700 7V4A3.300 3.300 0 0 1 9.300 4V7" stroke="#fff" strokeWidth="1.800" fill="none" />
        <rect x="5.200" y="8.500" width="1.600" height="3" fill="#0762bd" />
      </svg>
    </div>
    <div className={pill + " ml-[6px] h-6 w-[50px]"}>
      <span className="flex h-6 w-[25px] items-center justify-center border-r border-[#111] bg-[#0762bd]">
        <svg className="h-[14px] w-[15px]" viewBox="0 0 15 14" fill="#f0f0f0">
          <rect y="3.500" width="4" height="10.500" rx="1" />
          <path d="M0 1H2V2.500H0zM3 0H13V3H3z" />
          <rect x="5.200" y="4.200" width="9" height="9.500" rx="1.500" />
        </svg>
      </span>
      <span className="ml-[6px] font-bold">R</span>
    </div>
    <div className={pill + " ml-[6px] h-6 w-[40px]"}>
      <span className="flex h-6 w-[25px] shrink-0 items-center justify-center border-r border-[#111] bg-[#0762bd]">
        <svg className="h-[14px] w-[14px]" viewBox="0 0 14 14" fill="none" stroke="#f4f4f4" strokeWidth="1.200">
          <path d="M.6 .6H13.400V13.400H.6zM4.900 0V14M9.100 0V14M0 4.900H14M0 9.100H14" />
        </svg>
      </span>
      <span className="ml-[3px]">4</span>
    </div>
    <span className={pill + " ml-px h-6 w-[22px] justify-center"}>
      <svg className="h-[15px] w-[15px] shrink-0" viewBox="0 0 15 15">
        <path d="M4 .8H1V4M11 .8H14V4M4 14H1V11M11 14H14V11" stroke="#999" fill="none" strokeWidth="1.200" />
        <path d="M5 3L11 8.500H8.500L9.500 12L8 12.500L7 9.500L5 11z" fill="#e0e0e0" />
      </svg>
    </span>
    <span className={pill + " ml-px h-6 w-[22px] justify-center opacity-60"}>
      <svg className="h-3 w-4 shrink-0" viewBox="0 0 16 12">
        <rect x=".5" y=".5" width="15" height="11" fill="none" stroke="#999" />
        <path d="M1 11L5 5L8 8L11 4L15 11z" fill="#999" />
      </svg>
    </span>
    <span className={pill + " ml-px h-6 w-[22px] justify-center opacity-60"}>
      <svg className="h-3 w-4 shrink-0" viewBox="0 0 16 12">
        <path d="M6.500 1.500V11.500H1z" fill="none" stroke="#999" />
        <path d="M9 0L16 12H9z" fill="#aaa" />
      </svg>
    </span>
    <div className={pill + " ml-[2px] h-[27px] w-[96px] pl-[3px]"}>
      <span className="w-[73px] whitespace-nowrap tracking-[0.120px]">Screen Size</span><Chevron />
    </div>
    <div className={pill + " ml-1 h-[27px] w-[132px] pl-[3px]"}>
      <span className="w-[110px] shrink-0 whitespace-nowrap tracking-[0.080px]">Custom on Screen</span><Chevron />
    </div>
    <span className="ml-1 w-[37px] tracking-[-0.050px]">Width</span>
    <div className="flex h-[22px] w-[67px] items-center rounded-[4px] border border-[#333] bg-[#0f0f0f] text-white">
      <span className="h-[18px] w-[5px] rounded-[2px] bg-[#383838]" /><span className="ml-[2px] tracking-[-0.150px]">1365</span>
    </div>
    <span className="ml-1 w-[42px]">Height</span>
    <div className="flex h-[22px] w-[67px] items-center rounded-[4px] border border-[#333] bg-[#0f0f0f] text-white">
      <span className="ml-px h-4 w-[2px] bg-[#383838]" /><span className="ml-[4px] tracking-[-0.150px]">853</span>
    </div>
  </div>
);

const Bullet = ({ className }: { className: string }) => (
  <span className={"absolute left-[78px] flex h-[15px] w-[15px] items-center justify-center rounded-[2px] border border-[#d0d0d0] " + className}>
    <span className="h-[9px] w-[9px] border-2 border-[#b0b0b0]" />
  </span>
);

const Stage = () => (
  <div className="absolute top-[232px] left-[111px] h-[490px] w-[783px] bg-black font-[Roboto,sans-serif] whitespace-nowrap text-white">
    <svg className="absolute inset-0 h-full w-full" viewBox="0 0 783 490" fill="none" shapeRendering="crispEdges">
      <path d="M0 .5H783M.5 0V486M782.500 3V486M4 485.500H783" stroke="#8e8e8e" strokeDasharray="4 4" />
    </svg>
    <div className="absolute top-[50px] left-[58px] text-[53px] leading-[64px] font-semibold tracking-[1.450px]">Climate Settings</div>
    <Bullet className="top-[215px]" />
    <div className="absolute top-[208px] left-[100px] text-[21px] leading-7 font-medium tracking-[0.850px] text-[#dcdcdc]">Temperature</div>
    <div className="absolute top-[206px] left-[240px] origin-left scale-x-[1.260] text-[28px] leading-9 font-light tracking-[1.500px]">24</div>
    <div className="absolute top-[207px] left-[290px] text-[21px] leading-7">°C</div>
    <Bullet className="top-[276px]" />
    <div className="absolute top-[268px] left-[101px] text-[21px] leading-7 font-medium tracking-[0.900px] text-[#dcdcdc]">Wind Level</div>
    <svg className="absolute top-[277px] left-[300px] h-[30px] w-[174px]" viewBox="0 0 174 30">
      <circle cx="86.500" cy="15.500" r="14.500" fill="#033037" />
      <circle cx="86.500" cy="15.500" r="12" fill="#02505d" />
      <rect x="1" y="15" width="172" height="1" fill="#fff" />
      <rect x="74" y="15" width="25" height="1" fill="#7fdcea" />
      <circle cx="86.500" cy="15.500" r="3.400" fill="#a6f1ff" />
    </svg>
    <div className="absolute top-[360px] left-[78px] flex h-[46px] w-[137px] items-center justify-center rounded-[5px] border border-white bg-[#333]">
      <span className="scale-x-[0.860] pl-[2px] text-[25px]">Next</span>
    </div>
  </div>
);

const Viewport = () => (
  <div className="relative mr-[5px] w-[1049px] shrink-0 overflow-hidden bg-[#262626]">
    <Rulers />
    <Stage />
    <div className="absolute top-[22px] left-6 origin-left scale-x-[0.910] text-xl leading-6 font-bold whitespace-nowrap text-[#5a5a5a]">Zoom -3</div>
    <ViewportBar />
    <div className="absolute bottom-[1px] left-6 origin-left scale-x-[0.930] text-xl leading-[25px] font-bold whitespace-nowrap text-[#5a5a5a]">
      <div>Device Content Scale 1.0</div>
      <div className="tracking-[-0.100px]">No Device Safe Zone Set</div>
      <div className="tracking-[-0.050px]">1280 x 720 (16:9)</div>
    </div>
    <div className="absolute right-[34px] bottom-[1px] origin-right scale-x-[0.940] text-xl leading-[25px] font-bold whitespace-nowrap text-[#5a5a5a]">DPI Scale 0.85</div>
    <svg className="absolute right-[9px] bottom-[4px] h-4 w-4" viewBox="0 0 16 16" fill="none" stroke="#a3b8ea">
      <circle cx="8" cy="8" r="5" strokeWidth="2" />
      <circle cx="8" cy="8" r="7" strokeWidth="2" strokeDasharray="2 3.500" />
    </svg>
    <svg className="absolute top-[722px] left-[977px] h-[17px] w-[17px]" viewBox="0 0 17 17">
      <path d="M0 0H6.500V2L5.500 3L8.500 6L6.500 8L3 5.200L2 6.500H0zM17 17H10.500V15L11.500 14L8.500 11L10.500 9L14 11.800L15 10.500H17z" fill="#fff" />
    </svg>
  </div>
);

const Details = () => (
  <div className="mr-1 flex flex-1 flex-col">
    <div className="flex h-[25px] w-[160px] items-center rounded-t-[5px] bg-[#242424] pb-[2px] pl-[5px]">
      <svg className="h-[16px] w-4" viewBox="0 0 16 18">
        <path d="M0 3H8M0 7H5M10 11H15M7 15H15" stroke="#666" strokeWidth="1.300" />
        <path d="M0 17L1.500 12.500L12 0.500L15 3.500L4.500 15.500z" fill="#c8c8c8" />
      </svg>
      <span className="ml-[6px] w-[111px]">Details</span>
      <Close />
    </div>
    <div className="flex-1 bg-[#242424]" />
  </div>
);

/* ---------- status bar ---------- */

const StatusBar = () => (
  <div className="mt-1 mr-[3px] ml-px flex h-8 shrink-0 gap-[2px] border-b border-[#1c1c1c] *:flex *:items-center *:bg-[#242424] *:pt-[2px]">
    <div className="w-[130px] pl-[10px]">
      <span className="flex origin-left scale-[0.800]"><FolderSearch /></span><span className="-ml-px tracking-[-0.050px]">Content Drawer</span>
    </div>
    <div className="w-[104px] pl-[10px]">
      <svg className="h-[14px] w-[15px]" viewBox="0 0 15 14">
        <path d="M0 3.500L14 0V2L0 6z" fill="#999" />
        <path d="M3 2.500L5 5M7 1.500L9 4M11 .5L13 3" stroke="#242424" strokeWidth="1.200" />
        <rect y="6" width="15" height="8" fill="#b4b4b4" />
        <path d="M0 8.500H15M5 11.500H7M9 11.500H11" stroke="#444" strokeWidth="1" />
      </svg>
      <span className="ml-1 tracking-[-0.080px]">Animations</span>
    </div>
    <div className="w-[103px] pl-3">
      <svg className="h-[15px] w-[13px]" viewBox="0 0 13 15">
        <path d="M0 3H13V15H0z" fill="#c4c4c4" />
        <path d="M2.500 0V5M6.500 0V5M10.500 0V5" stroke="#c4c4c4" strokeWidth="1.500" />
        <path d="M2.500 6.500L5.500 9L2.500 11.500M6.500 12.500H11" stroke="#242424" strokeWidth="1.500" fill="none" />
      </svg>
      <span className="ml-[5px] tracking-[-0.150px] whitespace-nowrap">Output Log</span>
    </div>
    <div className="w-[398px] pl-[13px]">
      <svg className="h-[13px] w-4" viewBox="0 0 16 13" fill="none" stroke="#c4c4c4">
        <path d="M.5 1H15.500V12.500H.5zM.5 1.500H15.500" strokeWidth="1.200" />
        <path d="M3 4L6.500 6.500L3 9M8 9.500H13" strokeWidth="1.400" />
      </svg>
      <span className="ml-1 w-[32px] tracking-[-0.100px]">Cmd</span><Chevron />
      <div className="-mt-px ml-[14px] flex h-[22px] w-[299px] items-center rounded-[4px] border border-[#333] bg-[#0f0f0f] pb-[2px] pl-[7px] font-['DejaVu_Sans_Mono',monospace] text-[11.600px] text-[#505050]">Enter Console Command</div>
    </div>
    <div className="flex-1" />
    <div className="w-[98px] pl-3">
      <span className="-mr-px flex origin-left scale-[0.850]"><Floppy check /></span><span className="ml-[4px] whitespace-nowrap">All Saved</span>
    </div>
    <div className="w-[162px] pl-[15px]">
      <svg className="h-[15px] w-[14px]" viewBox="0 0 14 15">
        <path d="M3 3V12M11 3Q11 7.500 3 8.500" stroke="#999" strokeWidth="1.300" fill="none" />
        <circle cx="3" cy="2.700" r="2.500" fill="#c8c8c8" /><circle cx="11" cy="2.700" r="2.500" fill="#c8c8c8" /><circle cx="3" cy="12.300" r="2.500" fill="#c8c8c8" />
      </svg>
      <span className="ml-[6px] w-[98px] whitespace-nowrap">Revision Control</span><Chevron />
    </div>
  </div>
);

export default function App() {
  return (
    <div className="flex h-[1080px] w-[1920px] flex-col overflow-hidden bg-[#151515] font-[Roboto,sans-serif] text-[13px] leading-4 text-[#c0c0c0]">
      <TopBar />
      <div className="flex min-h-0 flex-1">
        <Dock />
        <div className="flex min-w-0 flex-1 flex-col">
          <Header />
          <Toolbar />
          <div className="mt-1 flex min-h-0 flex-1">
            <div className="mr-[5px] ml-1 flex w-[245px] shrink-0 flex-col">
              <Palette />
              <Hierarchy />
            </div>
            <Viewport />
            <Details />
          </div>
          <StatusBar />
        </div>
      </div>
    </div>
  );
}
